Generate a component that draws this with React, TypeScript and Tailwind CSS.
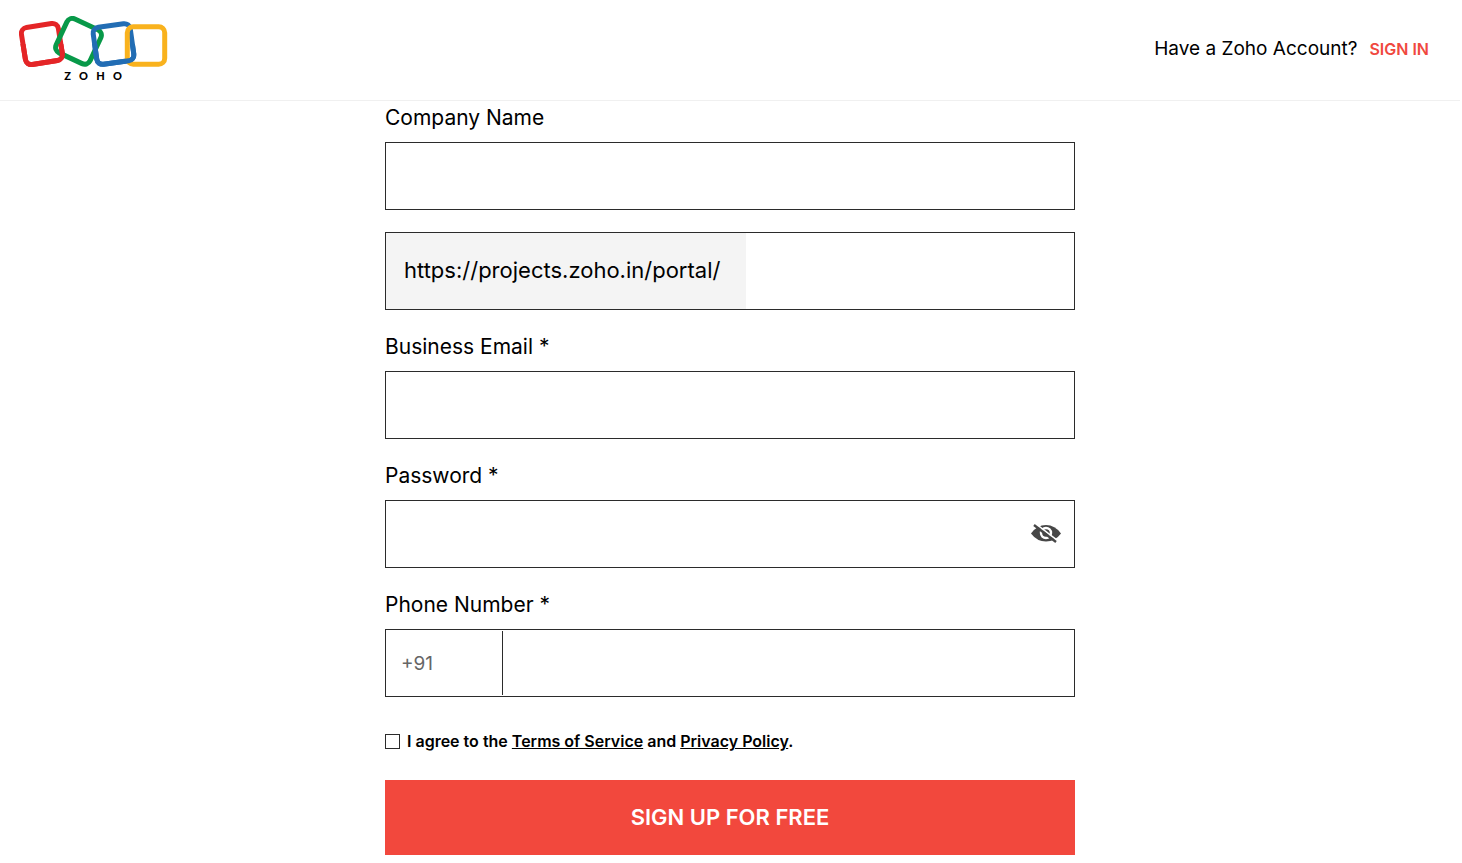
import { useState } from "react";

const fieldBox = "h-[68px] w-full border border-[#2b2b2b] bg-white px-4 text-xl outline-none";

function ZohoLogo() {
  return (
    <svg viewBox="0 0 150 66" className="h-[66px] w-[150px]" role="img" aria-label="Zoho">
      <defs>
        <clipPath id="lower">
          <rect x="0" y="28" width="150" height="38" />
        </clipPath>
      </defs>
      <g fill="none" strokeWidth="5">
        <rect x="4.2" y="9.3" width="37.4" height="37.4" rx="6" stroke="#e42527" transform="rotate(-9 22.9 28)" />
        <rect x="40.8" y="6.6" width="37.4" height="37.4" rx="6" stroke="#089949" transform="rotate(25 59.5 25.3)" />
        <g clipPath="url(#lower)">
          <rect x="4.2" y="9.3" width="37.4" height="37.4" rx="6" stroke="#e42527" transform="rotate(-9 22.9 28)" />
        </g>
        <rect x="75.8" y="9.3" width="37.4" height="37.4" rx="6" stroke="#226db4" transform="rotate(-8 94.5 28)" />
        <rect x="108.3" y="10.8" width="37.4" height="37.4" rx="6" stroke="#f9b21d" />
        <g clipPath="url(#lower)">
          <rect x="75.8" y="9.3" width="37.4" height="37.4" rx="6" stroke="#226db4" transform="rotate(-8 94.5 28)" />
        </g>
      </g>
      <g fill="#000" fontFamily="Lato, sans-serif" fontWeight="900" fontSize="11" textAnchor="middle">
        <text x="48.5" y="64">Z</text>
        <text x="64.5" y="64">O</text>
        <text x="81.500" y="64">H</text>
        <text x="98.500" y="64">O</text>
      </g>
    </svg>
  );
}

function HiddenEye() {
  return (
    <svg viewBox="0 0 30 20" className="h-5 w-[30px]" aria-hidden="true">
      <path d="M0 9.500Q6 1 15 1T30 9.500Q24 17.500 15 17.500T0 9.500Z" fill="#474747" />
      <circle cx="15" cy="9" r="5" fill="none" stroke="#fff" strokeWidth="2.400" />
      <path d="M5 0L27 17" stroke="#fff" strokeWidth="1.600" />
      <path d="M3 1L25 18" stroke="#474747" strokeWidth="2.400" />
    </svg>
  );
}

function Label({ id, children }: { id: string; children: string }) {
  return (
    <label htmlFor={id} className="mb-[7px] block text-[21px] leading-[34px]">
      {children}
    </label>
  );
}

export default function App() {
  const [visible, setVisible] = useState(false);
  return (
    <div className="min-h-screen bg-white pr-0.5 font-['Inter',sans-serif] text-black">
      <header className="flex h-[101px] items-start justify-between border-b border-[#f0f0f0] pr-[31px] pl-[19px]">
        <a href="#home" className="mt-4">
          <ZohoLogo />
        </a>
        <p className="mt-8 flex items-baseline gap-3 text-[19px] leading-[34px]">
          Have a Zoho Account?
          <a href="#signin" className="text-base font-semibold text-[#f0483e]">
            SIGN IN
          </a>
        </p>
      </header>
      <main className="mx-auto max-w-[690px]">
        <form className="flex flex-col gap-5 pb-2" onSubmit={(e) => e.preventDefault()}>
          <div>
            <Label id="company">Company Name</Label>
            <input id="company" className={fieldBox} />
            <div className="mt-[22px] flex h-[78px] border border-[#2b2b2b]">
              <label htmlFor="portal" className="flex w-[360px] items-center bg-[#f4f4f4] pb-0.5 pl-[18px] text-[22px] leading-8">
                https://projects.zoho.in/portal/
              </label>
              <input id="portal" className="min-w-0 flex-1 px-4 text-xl outline-none" />
            </div>
          </div>
          <div>
            <Label id="email">Business Email *</Label>
            <input id="email" type="email" className={fieldBox} />
          </div>
          <div>
            <Label id="password">Password *</Label>
            <div className="flex h-[68px] items-center border border-[#2b2b2b] pr-[13px]">
              <input
                id="password"
                type={visible ? "text" : "password"}
                className="h-full min-w-0 flex-1 px-4 text-xl outline-none"
              />
              <button type="button" aria-label="Show password" onClick={() => setVisible(!visible)}>
                <HiddenEye />
              </button>
            </div>
          </div>
          <div>
            <Label id="phone">Phone Number *</Label>
            <div className="flex h-[68px] border border-[#2b2b2b] py-px">
              <span className="flex w-[117px] items-center border-r border-[#2b2b2b] pt-0.5 pl-[15px] text-[19px] text-[#666]">
                +91
              </span>
              <input id="phone" type="tel" className="min-w-0 flex-1 px-4 text-xl outline-none" />
            </div>
          </div>
          <div>
            <div className="flex h-12 items-center gap-[7px] text-base font-semibold">
              <input id="agree" type="checkbox" className="size-[15px] appearance-none border border-[#2b2b2b] checked:bg-[#2b2b2b]" />
              <label htmlFor="agree">
                I agree to the{" "}
                <a href="#terms" className="underline">
                  Terms of Service
                </a>{" "}
                and{" "}
                <a href="#privacy" className="underline">
                  Privacy Policy
                </a>
                .
              </label>
            </div>
            <button type="submit" className="mt-[15px] h-[75px] w-full bg-[#f2483d] text-[22px] font-semibold text-white">
              SIGN UP FOR FREE
            </button>
          </div>
        </form>
      </main>
    </div>
  );
}
